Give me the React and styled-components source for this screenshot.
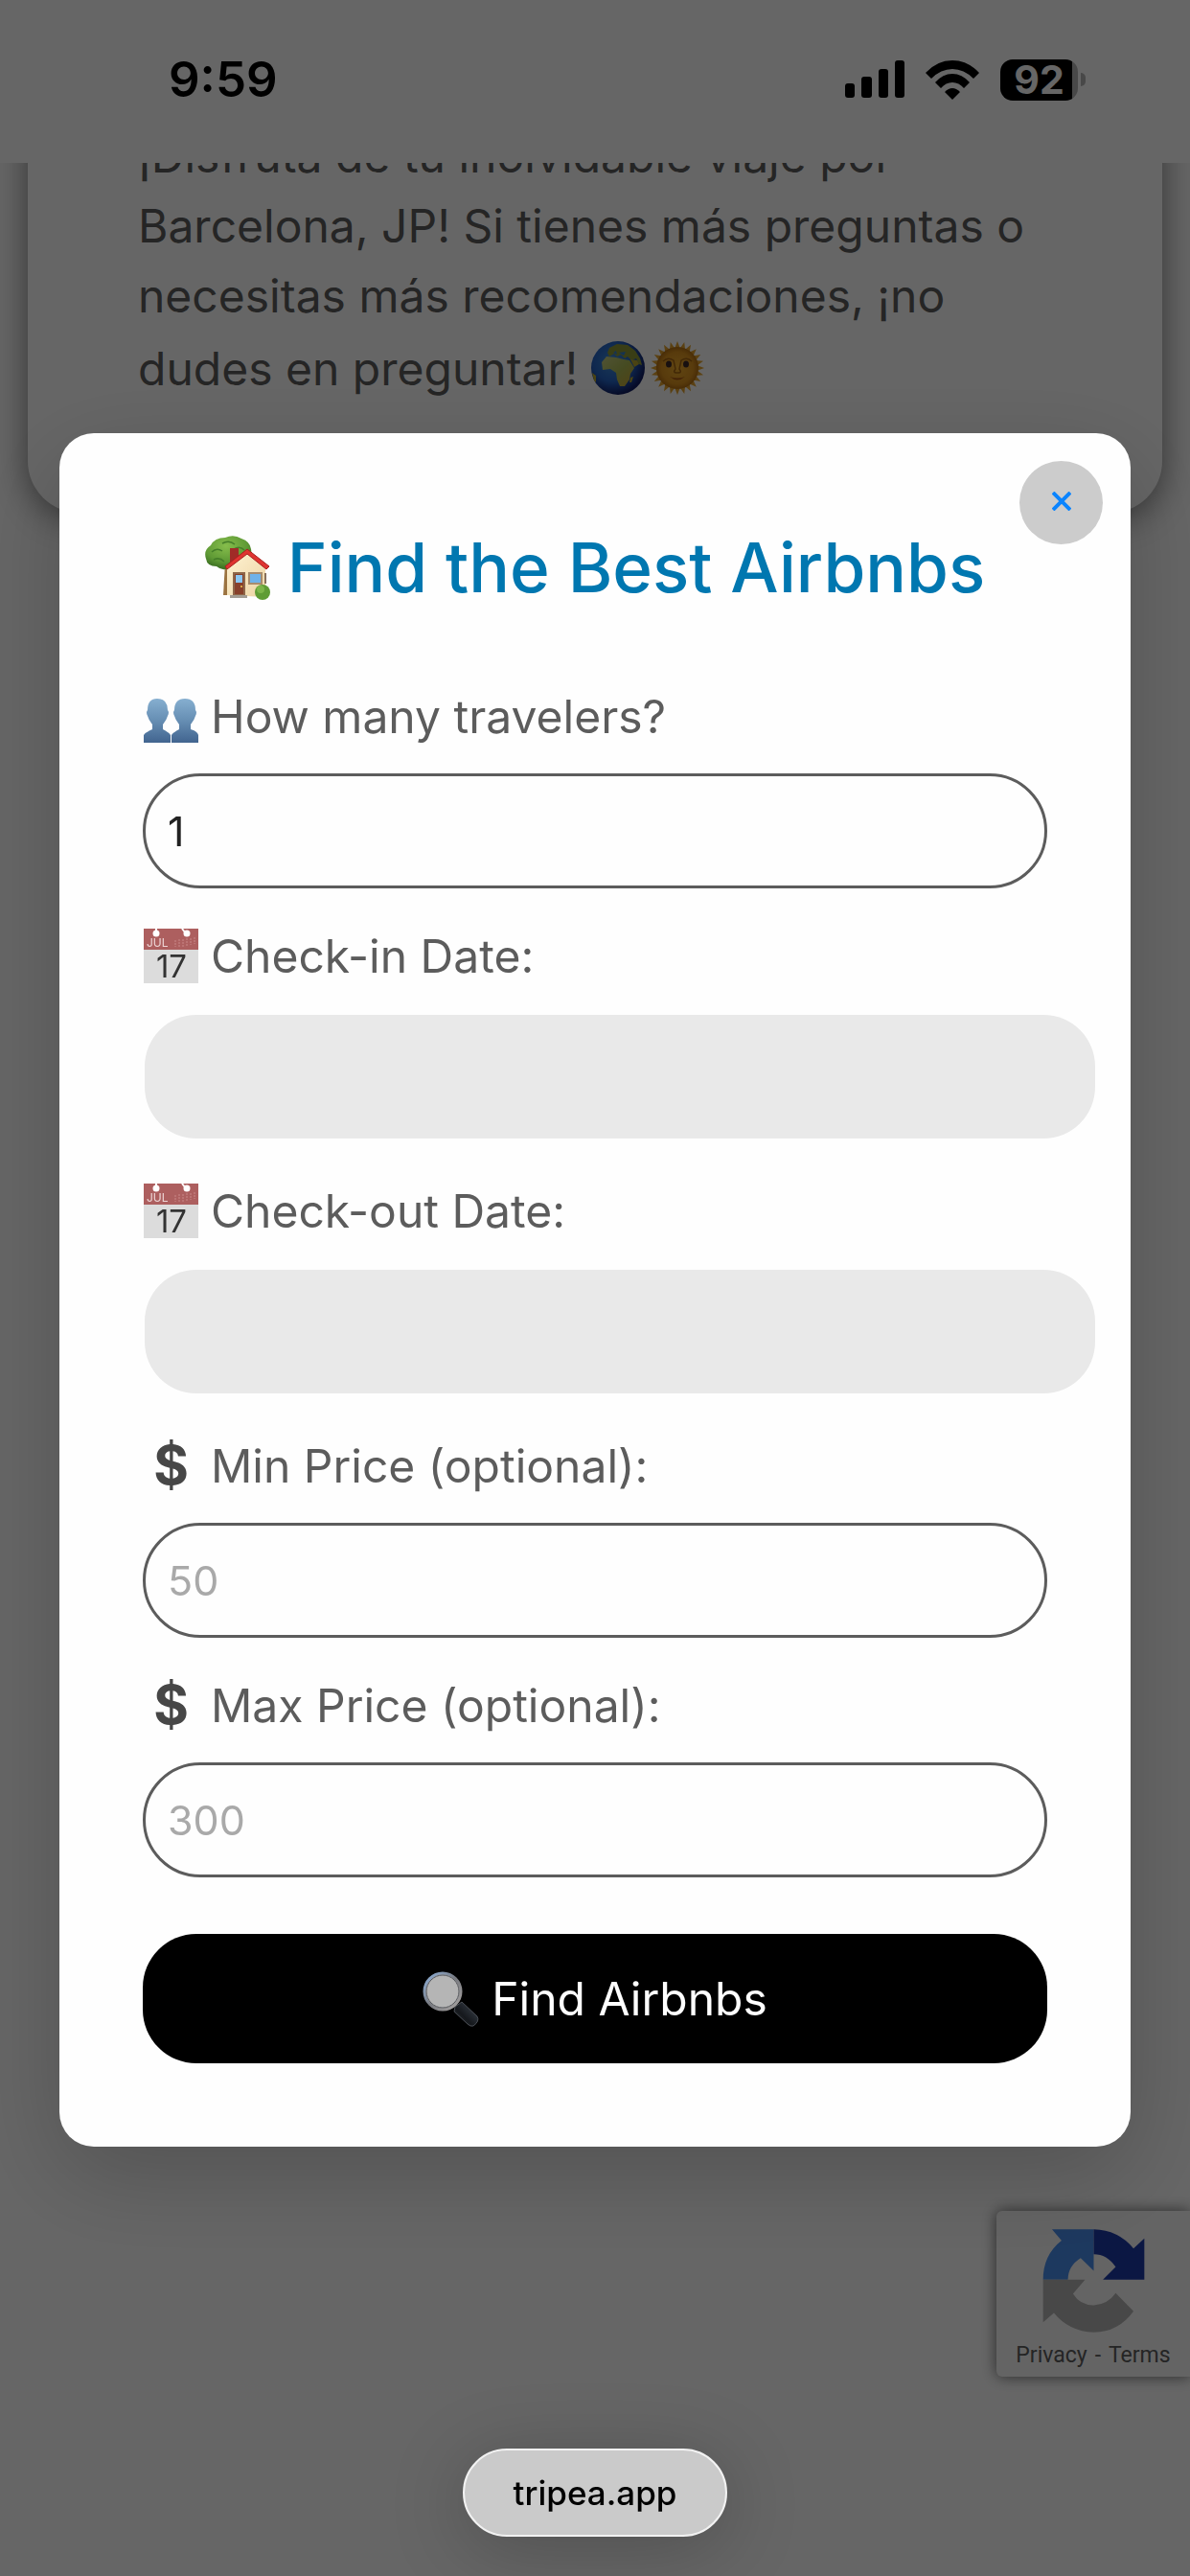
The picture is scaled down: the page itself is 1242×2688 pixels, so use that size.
import React from "react";
import styled, { createGlobalStyle } from "styled-components";

const GlobalStyle = createGlobalStyle`
  * { box-sizing: border-box; }
  body {
    margin: 0;
    background: #ffffff;
    font-family: Inter, "Noto Sans", sans-serif;
    color: #5c5c5c;
  }
`;

const Page = styled.div`
  display: flex;
  flex-direction: column;
  min-height: 100vh;
`;

const StatusBar = styled.header`
  display: flex;
  justify-content: space-between;
  align-items: center;
  height: 170px;
  padding: 0 109px 4px 176px;
  color: #000000;
`;

const Clock = styled.time`
  font-size: 51px;
  line-height: 60px;
  font-weight: 600;
`;

const StatusIcons = styled.div`
  display: flex;
  align-items: center;
  gap: 22px;
`;

const Battery = styled.div`
  display: flex;
  align-items: center;
  gap: 3px;
`;

const BatteryBody = styled.div`
  width: 81px;
  height: 43px;
  border-radius: 13px;
  background: linear-gradient(to right, #000000 75px, #b4b4b4 75px);
  color: #ffffff;
  font-size: 41px;
  line-height: 43px;
  font-weight: 700;
  text-align: center;
`;

const BatteryTip = styled.div`
  width: 5px;
  height: 14px;
  border-radius: 0 5px 5px 0;
  background: #b4b4b4;
`;

const Chat = styled.main`
  overflow: hidden;
  padding: 0 29px 60px;
`;

const Message = styled.article`
  margin-top: -44px;
  padding: 0 60px 112px 115px;
  border-radius: 0 0 54px 54px;
  background: #ffffff;
  box-shadow: 0 6px 36px rgba(0, 0, 0, 0.5);
`;

const MessageText = styled.p`
  margin: 0;
  font-size: 48px;
  line-height: 73px;
`;

const LastLine = styled.span`
  display: flex;
  align-items: center;
  height: 78px;
`;

const EmojiPair = styled.span`
  display: flex;
  gap: 6px;
  margin-left: 14px;
`;

const Captcha = styled.aside`
  align-self: flex-end;
  display: flex;
  flex-direction: column;
  align-items: center;
  gap: 9px;
  width: 202px;
  height: 173px;
  margin-top: auto;
  margin-bottom: 208px;
  padding-top: 19px;
  border-radius: 6px 0 0 6px;
  background: #fafafa;
  box-shadow: 0 0 15px rgba(0, 0, 0, 0.6);
`;

const CaptchaLinks = styled.div`
  display: flex;
  gap: 8px;
  font-family: Roboto, sans-serif;
  font-size: 23px;
  line-height: 30px;
`;

const CaptchaLink = styled.a`
  color: inherit;
  text-decoration: none;
`;

const Overlay = styled.div`
  position: fixed;
  inset: 0;
  display: flex;
  align-items: center;
  justify-content: center;
  padding: 4px 62px 0;
  background: rgba(0, 0, 0, 0.6);
`;

const Modal = styled.section`
  position: relative;
  width: 100%;
  padding: 86px 87px 87px;
  border-radius: 36px;
  background: #fefefe;
  box-shadow: 0 30px 100px rgba(0, 0, 0, 0.2);
`;

const CloseButton = styled.button`
  position: absolute;
  top: 29px;
  right: 29px;
  display: grid;
  place-items: center;
  width: 87px;
  height: 87px;
  padding: 0 0 4px;
  border: 0;
  border-radius: 50%;
  background: #cccccc;
  color: #0a84ff;
`;

const Title = styled.h2`
  display: flex;
  align-items: center;
  justify-content: center;
  gap: 18px;
  margin: 0 0 67px;
  color: #0077b0;
  font-size: 71px;
  line-height: 108px;
  font-weight: 500;
  white-space: nowrap;
`;

const Form = styled.form`
  display: flex;
  flex-direction: column;
  gap: 36px;
`;

const Field = styled.div`
  display: flex;
  flex-direction: column;
  gap: 25px;
`;

const Label = styled.label`
  display: flex;
  align-items: center;
  gap: 12px;
  font-size: 48px;
  line-height: 69px;
`;

const LabelIcon = styled.span`
  display: flex;
  justify-content: center;
  width: 59px;
`;

const Dollar = styled.span`
  color: #474747;
  font-size: 56px;
  font-weight: 700;
`;

const TextInput = styled.input`
  width: 100%;
  height: 120px;
  padding: 0 23px;
  border: 3px solid #5c5c5c;
  border-radius: 60px;
  background: transparent;
  color: #222222;
  font-family: inherit;
  font-size: 43px;
  appearance: textfield;

  &::placeholder {
    color: #a9a9a9;
    opacity: 1;
  }
`;

const DateInput = styled.input`
  width: calc(100% + 48px);
  height: 129px;
  margin: 2px 0 5px 2px;
  padding: 0 23px;
  border: 0;
  border-radius: 54px;
  background: #e9e9e9;

  &::-webkit-datetime-edit,
  &::-webkit-calendar-picker-indicator {
    opacity: 0;
  }
`;

const SubmitButton = styled.button`
  display: flex;
  align-items: center;
  justify-content: center;
  gap: 12px;
  height: 135px;
  margin-top: 23px;
  border: 0;
  border-radius: 56px;
  background: #000000;
  color: #ffffff;
  font-family: inherit;
  font-size: 48px;
`;

const AddressDock = styled.footer`
  position: fixed;
  inset: auto 0 41px;
  display: flex;
  justify-content: center;
`;

const AddressPill = styled.button`
  width: 276px;
  height: 92px;
  padding: 0;
  border: 2px solid #f2f2f2;
  border-radius: 46px;
  background: #cacaca;
  box-shadow: 0 12px 80px rgba(0, 0, 0, 0.22);
  color: #000000;
  font-family: inherit;
  font-size: 35px;
  font-weight: 500;
`;

const Signal = () => (
  <svg width="62" height="40" viewBox="0 0 62 40" aria-hidden="true">
    <rect x="0" y="24" width="10" height="15" rx="3" />
    <rect x="17" y="17" width="11" height="22" rx="3" />
    <rect x="35" y="9" width="10" height="30" rx="3" />
    <rect x="52" y="0" width="10" height="39" rx="3" />
  </svg>
);

const Wifi = () => (
  <svg width="56" height="41" viewBox="0 0 56 41" aria-hidden="true">
    <path d="M0 13Q12 0 28 0T56 13L50 19Q40 9 28 9T6 19Z" />
    <path d="M10 23Q18 14 28 14T46 23L40 29Q35 23 28 23T16 29Z" />
    <path d="M20 33Q28 25 36 33L28 41Z" />
  </svg>
);

const Globe = () => (
  <svg width="56" height="56" viewBox="0 0 56 56" aria-hidden="true">
    <defs>
      <radialGradient id="sea" cx="40%" cy="38%" r="62%">
        <stop offset="0" stopColor="#3f8cd8" />
        <stop offset="0.6" stopColor="#2563c4" />
        <stop offset="1" stopColor="#101d63" />
      </radialGradient>
      <linearGradient id="land" x1="0" y1="0" x2="1" y2="1">
        <stop offset="0" stopColor="#c9cf86" />
        <stop offset="0.5" stopColor="#aebc55" />
        <stop offset="1" stopColor="#c9a433" />
      </linearGradient>
    </defs>
    <circle cx="28" cy="28" r="28" fill="url(#sea)" />
    <path d="M17 12L19 7L27 3L38 4L46 10L51 18L53 25L50 24L47 18L42 20L38 16L35 18L31 14L27 16L24 13L19 16Z" fill="#8f9a35" />
    <path d="M11 22L16 16L26 17L34 19L40 20L45 28L41 34L40 40L35 47L30 47L27 40L26 33L20 29L12 30Z" fill="url(#land)" />
    <path d="M41 19L48 20L50 24L45 27ZM41 38L44 37L42 43L40 43ZM1 33L5 36L5 43L3 41Z" fill="#b9a82f" />
    <path d="M29 12L36 11L34 15ZM23 12L26 10L27 14Z" fill="#347fcd" />
  </svg>
);

const sunRays = Array.from({ length: 24 }, (_, i) => i * 15);

const Sun = () => (
  <svg width="56" height="56" viewBox="0 0 56 56" aria-hidden="true">
    <defs>
      <radialGradient id="sunFace">
        <stop offset="0" stopColor="#f0ad2d" />
        <stop offset="0.75" stopColor="#dc9320" />
        <stop offset="1" stopColor="#b56f12" />
      </radialGradient>
    </defs>
    {sunRays.map((angle) => (
      <path key={angle} d="M25 8L28 0L31 8Z" fill="#e3a32e" transform={`rotate(${angle} 28 28)`} />
    ))}
    <circle cx="28" cy="28" r="22" fill="url(#sunFace)" />
    <path d="M13 21Q18 16 24 20L26 29Q23 33 27 33H29Q33 33 30 29L32 20Q38 16 43 21" fill="none" stroke="#a56512" strokeWidth="1.5" />
    <ellipse cx="19" cy="24" rx="3" ry="3.5" fill="#3d2a2a" />
    <ellipse cx="37" cy="24" rx="3" ry="3.5" fill="#3d2a2a" />
    <path d="M20 37Q28 44 36 37Q28 40 20 37Z" fill="#a55413" />
  </svg>
);

const House = () => (
  <svg width="68" height="67" viewBox="0 0 68 67" aria-hidden="true">
    <defs>
      <radialGradient id="leaves" cx="45%" cy="30%" r="65%">
        <stop offset="0" stopColor="#86bd4c" />
        <stop offset="0.7" stopColor="#5f9a35" />
        <stop offset="1" stopColor="#3f7424" />
      </radialGradient>
      <linearGradient id="wall" x1="0" y1="0" x2="1" y2="1">
        <stop offset="0" stopColor="#fff3d2" />
        <stop offset="1" stopColor="#ecd3a4" />
      </linearGradient>
    </defs>
    <path d="M21 28H28V62H19Z" fill="#9b7340" />
    <path d="M1 24Q-2 15 6 10Q10 2 21 2Q30-2 38 3Q47 6 48 14Q50 24 42 26Q35 34 26 33Q19 38 12 32Q2 32 1 24Z" fill="url(#leaves)" />
    <path d="M7 17Q12 12 18 16M18 8Q25 4 31 9M9 25Q15 22 20 27M30 14Q36 10 41 15" fill="none" stroke="#457e29" strokeWidth="1.5" />
    <path d="M26 13H35V24L26 30Z" fill="#a02b27" />
    <path d="M44 17L23 34V62L63 64V33Z" fill="url(#wall)" />
    <path d="M44 14L21 32L23 35L44 19L64 35L67 32Z" fill="#df3431" stroke="#a9201f" strokeWidth="1" />
    <path d="M29 38H42V62H29Z" fill="#8e6749" />
    <path d="M31 40H40V61H31Z" fill="#87402a" />
    <path d="M32 41H39V49H32Z" fill="#8cc7f2" />
    <circle cx="38" cy="53" r="1" fill="#f1ca56" />
    <path d="M45 38H60V51H45Z" fill="#a88c6c" />
    <path d="M47 40H58V49H47Z" fill="#6fb2e9" />
    <path d="M63 39V50" stroke="#87705c" strokeWidth="2" />
    <path d="M26 62H44V65H26Z" fill="#a39d93" />
    <circle cx="60" cy="59" r="8" fill="#5f9c35" />
    <circle cx="58" cy="56" r="4" fill="#7db64a" />
  </svg>
);

const Travelers = () => (
  <svg width="57" height="54" viewBox="0 -8 57 54" aria-hidden="true">
    <defs>
      <linearGradient id="bust" x1="0" y1="0" x2="0" y2="1">
        <stop offset="0" stopColor="#86afd0" />
        <stop offset="0.5" stopColor="#668eb3" />
        <stop offset="1" stopColor="#41648f" />
      </linearGradient>
    </defs>
    <path d="M14 0Q25 0 25 12Q27 14 25 18Q24 22 20 27V32Q26 35 28 38V46H0V38Q2 35 9 32V27Q5 22 4 18Q2 14 4 12Q4 0 14 0Z" fill="url(#bust)" />
    <path d="M43 0Q54 0 54 12Q56 14 54 18Q53 22 49 27V32Q56 34 57 38V46H29V38Q31 35 37 32V27Q33 22 32 18Q30 14 32 12Q32 0 43 0Z" fill="url(#bust)" />
  </svg>
);

const Calendar = () => (
  <svg width="57" height="57" viewBox="0 0 57 57" overflow="visible" aria-hidden="true">
    <rect width="57" height="57" fill="#dcdcdc" />
    <rect width="57" height="22" fill="#ad5f5f" />
    <path d="M13 0V5M40 0L44 5" stroke="#ffffff" strokeWidth="2" />
    <circle cx="13" cy="5" r="3.5" fill="#ffffff" />
    <circle cx="45" cy="5" r="3.5" fill="#ffffff" />
    <path d="M33 12V19M37 11V19M41 11V19M45 10V18M49 10V17M53 9V16" stroke="#c98989" strokeWidth="1" strokeDasharray="2 1" />
    <text x="3" y="19" fill="#edd6d6" fontFamily="Inter, sans-serif" fontSize="12">JUL</text>
    <text x="29" y="51" fill="#333333" fontFamily="Inter, sans-serif" fontSize="33" textAnchor="middle">17</text>
  </svg>
);

const Magnifier = () => (
  <svg width="60" height="58" viewBox="0 0 60 58" aria-hidden="true">
    <defs>
      <linearGradient id="rim" x1="0" y1="0" x2="1" y2="1">
        <stop offset="0" stopColor="#8fb2dc" />
        <stop offset="0.5" stopColor="#77797f" />
        <stop offset="1" stopColor="#aaa6a4" />
      </linearGradient>
      <linearGradient id="handle" x1="0" y1="1" x2="1" y2="0">
        <stop offset="0" stopColor="#3a3d42" />
        <stop offset="0.4" stopColor="#15181c" />
        <stop offset="1" stopColor="#3f4752" />
      </linearGradient>
    </defs>
    <path d="M34 37L41 32L57 47Q60 52 53 57Q50 58 47 55L33 42Z" fill="url(#handle)" stroke="#4a4e55" strokeWidth="1" />
    <circle cx="21" cy="21" r="19" fill="#b5b5b5" stroke="url(#rim)" strokeWidth="3" />
    <circle cx="21" cy="21" r="17" fill="none" stroke="#55575c" strokeWidth="1" />
  </svg>
);

const RecaptchaLogo = () => (
  <svg width="107" height="108" viewBox="263 139 320 325" aria-hidden="true">
    <path d="M292 140H423V270L382 230Q342 255 342 298H264Q264 220 322 175Z" fill="#4a8fee" />
    <path d="M423 140Q500 142 548 200L582 168V298H452L492 258Q465 218 423 218Z" fill="#1c3aa9" />
    <path d="M264 298H396L358 342Q380 378 423 378Q467 376 492 340L548 397Q500 463 423 463Q345 460 298 402L264 432Z" fill="#b5b5b5" />
  </svg>
);

const CloseIcon = () => (
  <svg width="20" height="20" viewBox="0 0 20 20" aria-hidden="true">
    <path d="M1 1L19 19M19 1L1 19" stroke="currentColor" strokeWidth="4" />
  </svg>
);

const DateField = ({ id, label }) => (
  <Field>
    <Label htmlFor={id}>
      <LabelIcon><Calendar /></LabelIcon>
      {label}
    </Label>
    <DateInput id={id} type="date" />
  </Field>
);

const PriceField = ({ id, label, placeholder }) => (
  <Field>
    <Label htmlFor={id}>
      <LabelIcon><Dollar>$</Dollar></LabelIcon>
      {label}
    </Label>
    <TextInput id={id} type="number" placeholder={placeholder} />
  </Field>
);

export default function App() {
  return (
    <>
      <GlobalStyle />
      <Page>
        <StatusBar>
          <Clock>9:59</Clock>
          <StatusIcons>
            <Signal />
            <Wifi />
            <Battery>
              <BatteryBody>92</BatteryBody>
              <BatteryTip />
            </Battery>
          </StatusIcons>
        </StatusBar>
        <Chat>
          <Message>
            <MessageText>
              ¡Disfruta de tu inolvidable viaje por
              <br />
              Barcelona, JP! Si tienes más preguntas o
              <br />
              necesitas más recomendaciones, ¡no
              <LastLine>
                dudes en preguntar!
                <EmojiPair>
                  <Globe />
                  <Sun />
                </EmojiPair>
              </LastLine>
            </MessageText>
          </Message>
        </Chat>
        <Captcha>
          <RecaptchaLogo />
          <CaptchaLinks>
            <CaptchaLink href="#privacy">Privacy</CaptchaLink>
            <span>-</span>
            <CaptchaLink href="#terms">Terms</CaptchaLink>
          </CaptchaLinks>
        </Captcha>
      </Page>
      <Overlay>
        <Modal role="dialog" aria-labelledby="finder-title">
          <CloseButton type="button" aria-label="Close">
            <CloseIcon />
          </CloseButton>
          <Title id="finder-title">
            <House />
            Find the Best Airbnbs
          </Title>
          <Form onSubmit={(event) => event.preventDefault()}>
            <Field>
              <Label htmlFor="travelers">
                <LabelIcon><Travelers /></LabelIcon>
                How many travelers?
              </Label>
              <TextInput id="travelers" type="number" defaultValue="1" />
            </Field>
            <DateField id="check-in" label="Check-in Date:" />
            <DateField id="check-out" label="Check-out Date:" />
            <PriceField id="min-price" label="Min Price (optional):" placeholder="50" />
            <PriceField id="max-price" label="Max Price (optional):" placeholder="300" />
            <SubmitButton type="submit">
              <Magnifier />
              Find Airbnbs
            </SubmitButton>
          </Form>
        </Modal>
      </Overlay>
      <AddressDock>
        <AddressPill type="button">tripea.app</AddressPill>
      </AddressDock>
    </>
  );
}
